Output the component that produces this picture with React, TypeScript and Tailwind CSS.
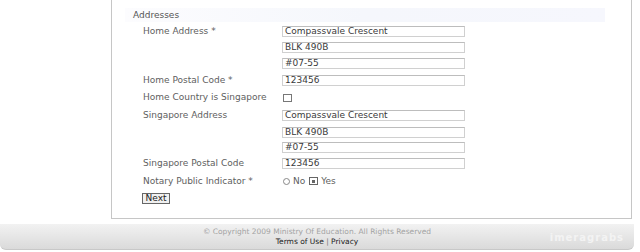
import React from "react";

const font = { fontFamily: '"DejaVu Sans", Verdana, sans-serif' };

function Field({ value }: { value: string }) {
  return (
    <div className="w-[183px] h-[11px] border border-[#d0d0d0] border-t-[#bdbdbd] bg-white flex items-center pl-[2px] text-[9px] leading-none text-[#3a3a3a] whitespace-nowrap overflow-hidden">
      {value}
    </div>
  );
}

function Row({ h, label, children }: { h: string; label?: string; children?: React.ReactNode }) {
  return (
    <div className={`flex items-center ${h}`}>
      <div className="w-[139px] text-[9px] leading-none text-[#606060] whitespace-nowrap">{label}</div>
      <div className="flex items-center">{children}</div>
    </div>
  );
}

export default function App() {
  return (
    <div className="w-[640px] h-[252px] bg-white overflow-hidden relative" style={font}>
      <div className="ml-[111px] w-[521px] h-[219px] border-l border-r border-b border-[#c6c6c6] flex flex-col">
        <div className="mt-[8px] ml-[13px] w-[480px] h-[14px] bg-gradient-to-r from-[#fcfcfe] via-[#f5f7fc] to-[#f6f7fd] flex items-center pl-[8px] text-[9px] leading-none text-[#555]">
          Addresses
        </div>
        <div className="mt-[1px] pl-[31px] flex flex-col">
          <Row h="h-[16px]" label="Home Address *">
            <Field value="Compassvale Crescent" />
          </Row>
          <Row h="h-[16px]">
            <Field value="BLK 490B" />
          </Row>
          <Row h="h-[17px]">
            <Field value="#07-55" />
          </Row>
          <Row h="h-[17px]" label="Home Postal Code *">
            <Field value="123456" />
          </Row>
          <Row h="h-[17px]" label="Home Country is Singapore">
            <div className="ml-[1px] w-[9px] h-[8px] border border-[#777] bg-white" />
          </Row>
          <Row h="h-[18px]" label="Singapore Address">
            <Field value="Compassvale Crescent" />
          </Row>
          <Row h="h-[16px]">
            <Field value="BLK 490B" />
          </Row>
          <Row h="h-[15px]">
            <Field value="#07-55" />
          </Row>
          <Row h="h-[17px]" label="Singapore Postal Code">
            <Field value="123456" />
          </Row>
          <Row h="h-[18px]" label="Notary Public Indicator *">
            <div className="flex items-center text-[9px] leading-none text-[#606060]">
              <div className="ml-[1px] w-[7px] h-[7px] rounded-full border border-[#888] bg-white" />
              <span className="ml-[3px]">No</span>
              <div className="ml-[4px] w-[9px] h-[8px] border border-[#666] bg-white flex items-center justify-center">
                <div className="w-[3px] h-[3px] bg-[#666]" />
              </div>
              <span className="ml-[3px]">Yes</span>
            </div>
          </Row>
          <div className="h-[16px] flex items-center">
            <div className="-ml-[1px] w-[28px] h-[11px] border border-[#666] bg-[#f0f0f0] flex items-center justify-center text-[9px] leading-none text-[#222]">
              Next
            </div>
          </div>
        </div>
      </div>
      <div className="mt-[5px] w-[634px] h-[26px] rounded-b-[6px] bg-gradient-to-b from-[#f2f2f2] to-[#dadada] border-b border-[#c8c8c8] flex flex-col items-center justify-center gap-[2px] relative">
        <div className="text-[7.5px] leading-none text-[#a3a3a3] whitespace-nowrap">
          © Copyright 2009 Ministry Of Education. All Rights Reserved
        </div>
        <div className="text-[7.5px] leading-none text-[#222] whitespace-nowrap">
          Terms of Use <span className="text-[#777]">|</span> Privacy
        </div>
        <div className="absolute right-[10px] top-[9px] text-[10px] font-bold leading-none text-[#f3f3f3] tracking-[1px]">
          imeragrabs
        </div>
      </div>
    </div>
  );
}
